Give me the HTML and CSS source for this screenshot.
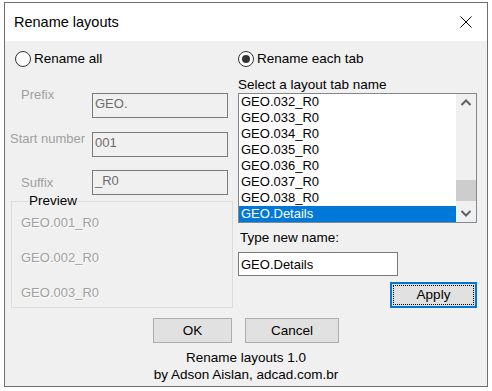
FILE: index.html
```html
<!DOCTYPE html>
<html lang="en">
<head>
  <meta charset="UTF-8" />
  <title>Rename layouts</title>
  <link rel="stylesheet" href="styles.css">
</head>
<body>
  <div class="window">
    <!-- Title bar -->
    <div class="titlebar">
      <span class="title">Rename layouts</span>
      <svg class="close" width="12" height="12" viewBox="0 0 12 12">
        <path d="M0.5 0.5 L11.5 11.5 M11.5 0.5 L0.5 11.5" stroke="#000" stroke-width="1" fill="none"/>
      </svg>
    </div>

    <div class="client">
      <div class="columns">
        <!-- Left: rename all -->
        <div class="col-left">
          <label class="radio-row">
            <span class="radio"></span>
            <span>Rename all</span>
          </label>

          <div class="field field-prefix">
            <span class="field-label">Prefix</span>
            <div class="disabled-box">GEO.</div>
          </div>
          <div class="field field-start">
            <span class="field-label">Start number</span>
            <div class="disabled-box">001</div>
          </div>
          <div class="field field-suffix">
            <span class="field-label">Suffix</span>
            <div class="disabled-box">_R0</div>
          </div>

          <fieldset class="preview">
            <legend>Preview</legend>
            <div class="preview-item">GEO.001_R0</div>
            <div class="preview-item">GEO.002_R0</div>
            <div class="preview-item">GEO.003_R0</div>
          </fieldset>
        </div>

        <!-- Right: rename each tab -->
        <div class="col-right">
          <label class="radio-row">
            <span class="radio checked"></span>
            <span>Rename each tab</span>
          </label>

          <div class="list-title">Select a layout tab name</div>
          <div class="listbox">
            <div class="list-items">
              <div class="list-item">GEO.032_R0</div>
              <div class="list-item">GEO.033_R0</div>
              <div class="list-item">GEO.034_R0</div>
              <div class="list-item">GEO.035_R0</div>
              <div class="list-item">GEO.036_R0</div>
              <div class="list-item">GEO.037_R0</div>
              <div class="list-item">GEO.038_R0</div>
              <div class="list-item selected">GEO.Details</div>
            </div>
            <div class="scrollbar">
              <svg class="arrow" width="20" height="17" viewBox="0 0 20 17">
                <path d="M5.5 11 L10 6.5 L14.5 11" stroke="#606060" stroke-width="2" fill="none"/>
              </svg>
              <div class="track">
                <div class="thumb"></div>
              </div>
              <svg class="arrow" width="20" height="17" viewBox="0 0 20 17">
                <path d="M5.5 6 L10 10.5 L14.5 6" stroke="#606060" stroke-width="2" fill="none"/>
              </svg>
            </div>
          </div>

          <div class="new-name-label">Type new name:</div>
          <input type="text" class="new-name" value="GEO.Details">
          <div class="apply-row">
            <button class="btn btn-apply"><span class="focus-rect">Apply</span></button>
          </div>
        </div>
      </div>

      <!-- OK / Cancel -->
      <div class="actions">
        <button class="btn btn-ok">OK</button>
        <button class="btn btn-cancel">Cancel</button>
      </div>

      <!-- Footer -->
      <div class="footer">
        Rename layouts 1.0<br>
        by Adson Aislan, adcad.com.br
      </div>
    </div>
  </div>
</body>
</html>
```

FILE: styles.css
```css
/* Basic Reset & Font */
* {
  margin: 0;
  padding: 0;
  box-sizing: border-box;
}
body, input, button {
  font-family: 'Liberation Sans', Arial, sans-serif;
  font-size: 13.5px;
  color: #000;
}
body {
  background: #fff;
}

/* Dialog window */
.window {
  margin: 2px 0 0 4px;
  width: 484px;
  height: 385px;
  border: 1px solid #6e6e6e;
  display: flex;
  flex-direction: column;
}

/* Title Bar */
.titlebar {
  height: 38px;
  background: #fff;
  display: flex;
  align-items: center;
  justify-content: space-between;
  padding: 0 15px 0 9px;
}
.title {
  font-size: 14.5px;
}
.close {
  display: block;
}

/* Client area */
.client {
  flex: 1;
  background: #f0f0f0;
  padding: 9px 0 0 5px;
}
.columns {
  display: grid;
  grid-template-columns: 228px 239px;
  height: 268px;
}

/* Radio buttons */
.radio-row {
  display: flex;
  align-items: center;
  gap: 3px;
  height: 17px;
  line-height: 16px;
}
.col-left .radio-row {
  margin-left: 5px;
}
.radio {
  width: 16px;
  height: 16px;
  border: 1px solid #333;
  border-radius: 50%;
  background: #fff;
  display: flex;
  align-items: center;
  justify-content: center;
}
.radio.checked::after {
  content: "";
  width: 8px;
  height: 8px;
  border-radius: 50%;
  background: #333;
}

/* Left column fields */
.field {
  display: flex;
  align-items: flex-start;
  font-size: 13px;
}
.field-label {
  width: 82px;
  line-height: 16px;
  color: #a0a0a0;
}
.disabled-box {
  width: 136px;
  height: 25px;
  border: 1px solid #7a7a7a;
  background: #f0f0f0;
  color: #6d6d6d;
  padding: 2px 0 0 2px;
  line-height: 16px;
}
.field-prefix {
  margin-top: 20px;
}
.field-prefix .field-label {
  padding-left: 11px;
}
.field-prefix .disabled-box {
  margin-top: 6px;
}
.field-start {
  margin-top: 13px;
}
.field-start .disabled-box {
  margin-top: 1px;
}
.field-suffix {
  margin-top: 13px;
}
.field-suffix .field-label {
  padding: 5px 0 0 11px;
}

/* Preview group */
.preview {
  margin: -1px 0 0 1px;
  width: 222px;
  height: 114px;
  border: 1px solid #dcdcdc;
  padding: 7px 0 0 9px;
}
.preview legend {
  margin-left: 7px;
  padding: 0 1px;
  line-height: 14px;
}
.preview-item {
  font-size: 13px;
  color: #a0a0a0;
  text-shadow: 1px 1px 0 #fff;
  line-height: 16px;
  margin-bottom: 19px;
}

/* Right column */
.list-title {
  margin-top: 10px;
  line-height: 16px;
}
.listbox {
  height: 130px;
  border: 1px solid #828790;
  background: #fff;
  display: flex;
  font-size: 13px;
}
.list-items {
  flex: 1;
}
.list-item {
  height: 16px;
  line-height: 16px;
  padding-left: 2px;
}
.list-item.selected {
  background: #0078d7;
  color: #fff;
}
.scrollbar {
  width: 20px;
  background: #f0f0f0;
  display: flex;
  flex-direction: column;
}
.arrow {
  display: block;
}
.track {
  flex: 1;
  display: flex;
  flex-direction: column;
  justify-content: flex-end;
  padding-bottom: 4px;
}
.thumb {
  height: 21px;
  background: #cdcdcd;
}

.new-name-label {
  margin-top: 7px;
  padding-left: 2px;
  line-height: 16px;
}
.new-name {
  display: block;
  margin-top: 6px;
  width: 160px;
  height: 24px;
  border: 1px solid #7a7a7a;
  background: #fff;
  padding: 0 2px;
  font-size: 13px;
  outline: none;
}

/* Buttons */
.btn {
  background: #e1e1e1;
  border: 1px solid #adadad;
  height: 25px;
  cursor: pointer;
}
.apply-row {
  display: flex;
  justify-content: flex-end;
  margin-top: 6px;
}
.btn-apply {
  width: 87px;
  height: 26px;
  border: 2px solid #0078d7;
  padding: 1px;
}
.focus-rect {
  display: block;
  height: 100%;
  border: 1px dotted #000;
  line-height: 18px;
}
.actions {
  display: flex;
  justify-content: center;
  gap: 13px;
  padding-right: 5px;
}
.btn-ok {
  width: 79px;
}
.btn-cancel {
  width: 94px;
}

/* Footer */
.footer {
  text-align: center;
  line-height: 17px;
  margin-top: 6px;
  padding-right: 5px;
}
```
